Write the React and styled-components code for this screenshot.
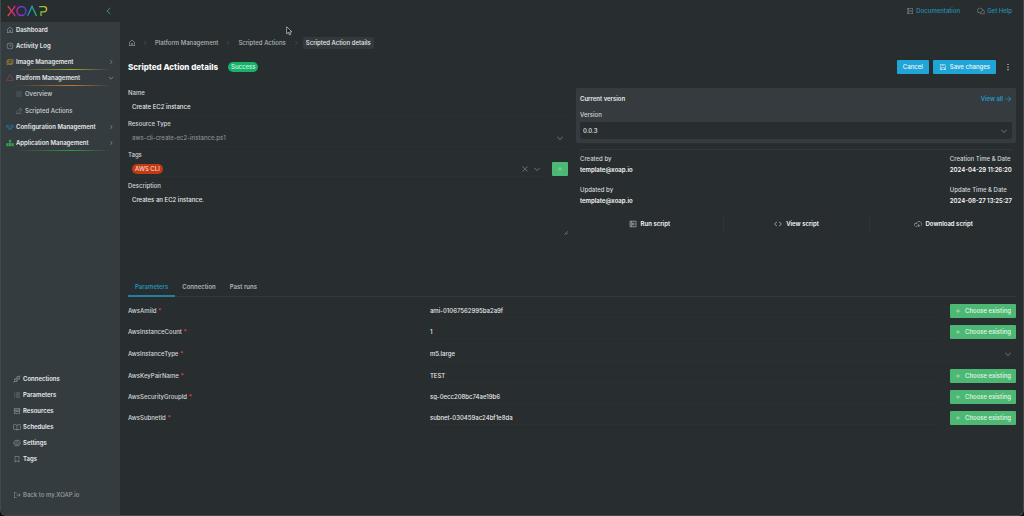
import { useState } from "react";
import styled, { createGlobalStyle } from "styled-components";
import {
  PiHouse,
  PiClock,
  PiImages,
  PiTriangle,
  PiList,
  PiPencilSimpleLine,
  PiUsersThree,
  PiPlugs,
  PiListDashes,
  PiStorefront,
  PiBookOpen,
  PiGearSix,
  PiBookmarkSimple,
  PiSignOut,
  PiNotebook,
  PiChatsCircle,
  PiFloppyDisk,
  PiDotsThreeVerticalBold,
  PiCodeSimple,
  PiCloudArrowDown,
  PiArrowRight,
  PiCaretLeft,
  PiCaretRight,
  PiCaretDown,
  PiX,
  PiPlus,
} from "react-icons/pi";

const COLORS = {
  page: "#282d2f",
  side: "#353c40",
  card: "#353b3f",
  line: "#33393c",
  label: "#d3d7d8",
  text: "#e6e9ea",
  bright: "#f6f8f8",
  muted: "#8b9194",
  blue: "#1fa5d8",
  link: "#2391b8",
  green: "#4cb873",
  success: "#17b26a",
  tag: "#c23a12",
  danger: "#e5325c",
};

const BlocksIcon = ({ size, color }) => (
  <svg width={size} height={size} viewBox="0 0 8 8">
    <path
      d="M2.9 0.8 H5.1 V3.2 H4.3 V4.3 H7.7 V7.2 H0.3 V4.3 H3.7 V3.2 H2.9 Z M2.5 5 V7.2 H2.9 V5 Z M5.1 5 V7.2 H5.5 V5 Z"
      fill={color}
      fillRule="evenodd"
    />
  </svg>
);

const RunIcon = () => (
  <svg width="8" height="8" viewBox="0 0 8 8" fill="none" stroke="currentColor" strokeWidth="0.7">
    <path d="M1 1.2 H7 V6.8 H1 Z M2.4 1.2 V6.8" />
    <path d="M3.7 2.8 L5.6 4 L3.7 5.2 Z" />
  </svg>
);

const mainNav = [
  { name: "Dashboard", icon: PiHouse },
  { name: "Activity Log", icon: PiClock },
  { name: "Image Management", icon: PiImages, color: "#c4922a", line: "#a3a52c", caret: "right" },
  {
    name: "Platform Management",
    icon: PiTriangle,
    color: "#b0413e",
    line: "#c9742a",
    caret: "down",
    children: [
      { name: "Overview", icon: PiList },
      { name: "Scripted Actions", icon: PiPencilSimpleLine },
    ],
  },
  { name: "Configuration Management", icon: PiUsersThree, color: "#2187b8", caret: "right" },
  { name: "Application Management", icon: BlocksIcon, color: "#35a04a", line: "#2f9a3c", caret: "right" },
];

const bottomNav = [
  { name: "Connections", icon: PiPlugs },
  { name: "Parameters", icon: PiListDashes },
  { name: "Resources", icon: PiStorefront },
  { name: "Schedules", icon: PiBookOpen },
  { name: "Settings", icon: PiGearSix },
  { name: "Tags", icon: PiBookmarkSimple },
];

const tabs = ["Parameters", "Connection", "Past runs"];

const initialParams = [
  { name: "AwsAmiId", value: "ami-01067562995ba2a9f" },
  { name: "AwsInstanceCount", value: "1" },
  { name: "AwsInstanceType", value: "m5.large", select: true },
  { name: "AwsKeyPairName", value: "TEST" },
  { name: "AwsSecurityGroupId", value: "sg-0ecc208bc74ae19b6" },
  { name: "AwsSubnetId", value: "subnet-030459ac24bf1e8da" },
];

const Logo = () => (
  <svg width="41" height="12" viewBox="0 0 41 12" fill="none" strokeWidth="1.3" aria-label="XOAP">
    <defs>
      <linearGradient id="logo" x1="0" y1="0" x2="41" y2="0" gradientUnits="userSpaceOnUse">
        <stop offset="0" stopColor="#e8482f" />
        <stop offset="0.15" stopColor="#d62a7c" />
        <stop offset="0.3" stopColor="#a02bd0" />
        <stop offset="0.44" stopColor="#5a3fe0" />
        <stop offset="0.56" stopColor="#1e9fd0" />
        <stop offset="0.72" stopColor="#22b573" />
        <stop offset="0.86" stopColor="#8cc832" />
        <stop offset="1" stopColor="#e0c020" />
      </linearGradient>
    </defs>
    <g stroke="url(#logo)">
      <path d="M0.8 1 L4.6 6 L0.8 11" />
      <path d="M8.2 1 L4.6 6 L8.2 11" />
      <circle cx="14.4" cy="6" r="4.5" />
      <path d="M20.5 11 L25 1.4 L29.5 11" />
      <path d="M32 1.6 H37 A2.6 2.6 0 0 1 37 6.8 H34 V11" />
    </g>
  </svg>
);

const NavEntry = ({ item }) => {
  const Icon = item.icon;
  return (
    <li>
      <NavLink href="#" $line={item.line} $iconColor={item.color}>
        <Icon size="8" color={item.color} />
        <span>{item.name}</span>
        {item.caret === "right" && <PiCaretRight size="6" />}
        {item.caret === "down" && <PiCaretDown size="6" />}
      </NavLink>
      {item.children && (
        <SubList>
          {item.children.map((child) => (
            <li key={child.name}>
              <SubLink href="#">
                <child.icon size="8" />
                {child.name}
              </SubLink>
            </li>
          ))}
        </SubList>
      )}
    </li>
  );
};

const Sidebar = () => (
  <Side>
    <SideHeader>
      <Logo />
      <IconButton aria-label="Collapse menu">
        <PiCaretLeft size="10" color="#45a5b5" />
      </IconButton>
    </SideHeader>
    <SideBody>
      <NavList>
        {mainNav.map((item) => (
          <NavEntry key={item.name} item={item} />
        ))}
      </NavList>
      <BottomList>
        {bottomNav.map(({ name, icon: Icon }) => (
          <li key={name}>
            <NavLink href="#">
              <Icon size="8" />
              <span>{name}</span>
            </NavLink>
          </li>
        ))}
      </BottomList>
      <BackLink href="#">
        <PiSignOut size="8" />
        Back to my.XOAP.io
      </BackLink>
    </SideBody>
  </Side>
);

const DetailsForm = () => (
  <Form>
    <Field>
      <Label htmlFor="name">Name</Label>
      <TextInput id="name" defaultValue="Create EC2 instance" />
    </Field>
    <Field>
      <Label htmlFor="type">Resource Type</Label>
      <SelectBox>
        <Select id="type" disabled>
          <option>aws-cli-create-ec2-instance.ps1</option>
        </Select>
        <PiCaretDown size="8" />
      </SelectBox>
    </Field>
    <Field>
      <Label as="span">Tags</Label>
      <TagRow>
        <TagBox>
          <Tag>AWS CLI</Tag>
          <IconButton aria-label="Clear tags">
            <PiX size="8" />
          </IconButton>
          <IconButton aria-label="Open tags">
            <PiCaretDown size="8" />
          </IconButton>
        </TagBox>
        <AddButton aria-label="Add tag">
          <PiPlus size="6" />
        </AddButton>
      </TagRow>
    </Field>
    <Field>
      <Label htmlFor="description">Description</Label>
      <AreaBox>
        <TextArea id="description" defaultValue="Creates an EC2 instance." />
        <svg width="4" height="4" viewBox="0 0 4 4" fill="none" stroke="#8b9194" strokeWidth="0.7">
          <path d="M3.6 0.4 L0.4 3.6 M3.6 2.2 L2.2 3.6" />
        </svg>
      </AreaBox>
    </Field>
  </Form>
);

const VersionPanel = () => (
  <Panel>
    <Card>
      <CardHeader>
        <CardTitle>Current version</CardTitle>
        <ViewAll href="#">
          View all
          <PiArrowRight size="8" />
        </ViewAll>
      </CardHeader>
      <Label htmlFor="version">Version</Label>
      <VersionSelectBox>
        <Select id="version">
          <option>0.0.3</option>
        </Select>
        <PiCaretDown size="8" />
      </VersionSelectBox>
    </Card>
    <Meta>
      <div>
        <dt>Created by</dt>
        <dd>template@xoap.io</dd>
      </div>
      <div>
        <dt>Creation Time &amp; Date</dt>
        <dd>2024-04-29 11:26:20</dd>
      </div>
      <div>
        <dt>Updated by</dt>
        <dd>template@xoap.io</dd>
      </div>
      <div>
        <dt>Update Time &amp; Date</dt>
        <dd>2024-08-27 13:25:27</dd>
      </div>
    </Meta>
    <ScriptActions>
      <ScriptButton>
        <RunIcon />
        Run script
      </ScriptButton>
      <ScriptButton>
        <PiCodeSimple size="8" />
        View script
      </ScriptButton>
      <ScriptButton>
        <PiCloudArrowDown size="8" />
        Download script
      </ScriptButton>
    </ScriptActions>
  </Panel>
);

const ParamRow = ({ param }) => (
  <Row>
    <ParamLabel htmlFor={param.name}>
      {param.name} <Required>*</Required>
    </ParamLabel>
    {param.select ? (
      <ParamSelectBox>
        <Select id={param.name}>
          <option>{param.value}</option>
        </Select>
        <PiCaretDown size="8" />
      </ParamSelectBox>
    ) : (
      <>
        <ParamInput id={param.name} defaultValue={param.value} />
        <ChooseButton>
          <PiPlus size="6" />
          Choose existing
        </ChooseButton>
      </>
    )}
  </Row>
);

const App = () => {
  const [activeTab, setActiveTab] = useState("Parameters");

  return (
    <>
      <GlobalStyle />
      <Window>
        <Sidebar />
        <Main>
          <TopBar>
            <TopLink href="#">
              <PiNotebook size="8" />
              Documentation
            </TopLink>
            <TopLink href="#">
              <PiChatsCircle size="8" />
              Get Help
            </TopLink>
          </TopBar>
          <Breadcrumb aria-label="Breadcrumb">
            <Crumb href="#" aria-label="Home">
              <PiHouse size="8" />
            </Crumb>
            <PiCaretRight size="6" />
            <Crumb href="#">Platform Management</Crumb>
            <PiCaretRight size="6" />
            <Crumb href="#">Scripted Actions</Crumb>
            <PiCaretRight size="6" />
            <Crumb href="#" $current>
              Scripted Action details
            </Crumb>
          </Breadcrumb>
          <TitleRow>
            <Title>Scripted Action details</Title>
            <Status>Success</Status>
            <TitleActions>
              <PrimaryButton>Cancel</PrimaryButton>
              <PrimaryButton>
                <PiFloppyDisk size="8" />
                Save changes
              </PrimaryButton>
              <MoreButton aria-label="More">
                <PiDotsThreeVerticalBold size="10" />
              </MoreButton>
            </TitleActions>
          </TitleRow>
          <Columns>
            <DetailsForm />
            <VersionPanel />
          </Columns>
          <TabList role="tablist">
            {tabs.map((tab) => (
              <Tab
                key={tab}
                role="tab"
                aria-selected={tab === activeTab}
                $active={tab === activeTab}
                onClick={() => setActiveTab(tab)}
              >
                {tab}
              </Tab>
            ))}
          </TabList>
          <Params>
            {initialParams.map((param) => (
              <ParamRow key={param.name} param={param} />
            ))}
          </Params>
        </Main>
        <Pointer width="7" height="10" viewBox="0 0 7 10">
          <path
            d="M0.7 0.8 V7.8 L2.4 6.3 L3.5 9 L4.7 8.5 L3.6 5.9 H5.9 Z"
            fill="#111"
            stroke="#d8dada"
            strokeWidth="0.7"
          />
        </Pointer>
      </Window>
    </>
  );
};

const GlobalStyle = createGlobalStyle`
  * {
    box-sizing: border-box;
  }
  body {
    margin: 0;
    background: #0b0d0e;
    color: ${COLORS.text};
    font-family: Inter, "Liberation Sans", sans-serif;
    font-size: 6px;
    font-weight: 500;
    line-height: 10px;
  }
  a {
    color: inherit;
    text-decoration: none;
  }
  ul, dl, dd, h1, h2 {
    margin: 0;
    padding: 0;
    list-style: none;
  }
  button, input, select, textarea {
    margin: 0;
    padding: 0;
    border: 0;
    border-radius: 0;
    outline: none;
    background: transparent;
    color: inherit;
    font: inherit;
  }
  button {
    cursor: pointer;
  }
  svg {
    display: block;
    flex-shrink: 0;
  }
`;

const Window = styled.div`
  position: relative;
  display: flex;
  min-height: 100vh;
  border: 1px solid #42494c;
  border-top: 0;
  border-radius: 0 0 6px 6px;
  background: ${COLORS.page};
  overflow: hidden;
`;

const Side = styled.aside`
  display: flex;
  flex-direction: column;
  flex: 0 0 119px;
`;

const SideHeader = styled.div`
  display: flex;
  align-items: center;
  justify-content: space-between;
  height: 22px;
  padding: 0 6px;
`;

const SideBody = styled.nav`
  display: flex;
  flex-direction: column;
  flex: 1;
  padding-bottom: 15px;
  background: ${COLORS.side};
`;

const NavList = styled.ul`
  flex: 1;
`;

const NavLink = styled.a`
  display: flex;
  align-items: center;
  gap: 2px;
  height: 16px;
  padding: 0 6px 1px 5px;
  color: ${COLORS.text};
  font-weight: 600;
  background: ${(props) =>
    props.$line
      ? `linear-gradient(90deg, transparent 12%, ${props.$line} 60%, transparent 92%) bottom / 100% 1px no-repeat`
      : "none"};

  span {
    flex: 1;
  }
  svg {
    color: #9ba1a4;
  }
  svg:first-child {
    color: ${(props) => props.$iconColor || "#9ba1a4"};
  }
`;

const SubList = styled.ul`
  display: grid;
  gap: 1px;
`;

const SubLink = styled.a`
  display: flex;
  align-items: center;
  gap: 2px;
  height: 16px;
  padding-left: 14px;
  color: #ccd1d3;

  svg {
    color: #70777b;
  }
`;

const BottomList = styled.ul`
  margin-bottom: 23px;
  padding-left: 7px;
`;

const BackLink = styled.a`
  display: flex;
  align-items: center;
  gap: 2px;
  padding-left: 12px;
  color: #989ea1;
`;

const Main = styled.main`
  flex: 1;
  min-width: 0;
  padding: 0 7px 16px 8px;
`;

const TopBar = styled.div`
  display: flex;
  align-items: center;
  justify-content: flex-end;
  gap: 17px;
  height: 22px;
  padding-right: 4px;
`;

const TopLink = styled.a`
  display: flex;
  align-items: center;
  gap: 2px;
  color: ${COLORS.link};

  svg {
    color: #858b8e;
  }
`;

const Breadcrumb = styled.nav`
  display: flex;
  align-items: center;
  gap: 4px;
  margin-top: 15px;
  color: #565c5f;
`;

const Crumb = styled.a`
  padding: 1px 3px;
  border-radius: 2px;
  color: ${(props) => (props.$current ? COLORS.text : "#b0b5b7")};
  background: ${(props) => (props.$current ? "#333a3d" : "transparent")};

  &:first-child {
    padding: 0 2px 0 0;
  }
`;

const TitleRow = styled.div`
  display: flex;
  align-items: center;
  gap: 10px;
  height: 14px;
  margin-top: 11px;
`;

const Title = styled.h1`
  color: ${COLORS.bright};
  font-size: 8px;
  font-weight: 800;
`;

const Status = styled.span`
  padding: 0 3px;
  border-radius: 5px;
  background: ${COLORS.success};
  color: #d5f5e3;
`;

const TitleActions = styled.div`
  display: flex;
  align-items: center;
  gap: 4px;
  margin-left: auto;
`;

const PrimaryButton = styled.button`
  display: flex;
  align-items: center;
  gap: 3px;
  height: 14px;
  padding: 0 6px;
  border-radius: 1px;
  background: ${COLORS.blue};
  color: ${COLORS.bright};
`;

const IconButton = styled.button`
  color: ${COLORS.muted};
`;

const MoreButton = styled(IconButton)`
  padding: 0 3px;
  color: ${COLORS.bright};
`;

const Columns = styled.div`
  display: grid;
  grid-template-columns: 1fr 1fr;
  gap: 8px;
  margin-top: 14px;
`;

const Form = styled.form`
  display: flex;
  flex-direction: column;
  gap: 3px;
`;

const Field = styled.div`
  display: flex;
  flex-direction: column;
`;

const Label = styled.label`
  color: ${COLORS.label};
`;

const TextInput = styled.input`
  height: 18px;
  padding: 0 4px;
  border-bottom: 1px solid #2b3133;
`;

const SelectBox = styled.div`
  display: flex;
  align-items: center;
  height: 18px;
  padding: 0 4px;
  border-bottom: 1px solid #2b3133;
  color: ${COLORS.muted};
`;

const Select = styled.select`
  flex: 1;
  appearance: none;

  &:disabled {
    opacity: 1;
  }
`;

const TagRow = styled.div`
  display: flex;
  align-items: center;
  gap: 8px;
  height: 18px;
`;

const TagBox = styled.div`
  display: flex;
  align-items: center;
  flex: 1;
  gap: 4px;
  height: 16px;
  padding: 0 3px 0 4px;
  border-bottom: 1px solid #2b3133;
`;

const Tag = styled.span`
  margin-right: auto;
  padding: 0 3px;
  border-radius: 5px;
  background: ${COLORS.tag};
  color: #f3d9cf;
`;

const AddButton = styled.button`
  display: grid;
  place-items: center;
  width: 16px;
  height: 14px;
  border-radius: 1px;
  background: ${COLORS.green};
  color: #b6e6c6;
`;

const AreaBox = styled.div`
  display: flex;
  align-items: flex-end;
  height: 46px;
  padding: 4px 0 2px 4px;
`;

const TextArea = styled.textarea`
  flex: 1;
  align-self: stretch;
  resize: none;
`;

const Panel = styled.section`
  display: flex;
  flex-direction: column;
`;

const Card = styled.div`
  display: flex;
  flex-direction: column;
  padding: 6px 4px 4px 4px;
  border-radius: 2px;
  background: ${COLORS.card};
`;

const CardHeader = styled.div`
  display: flex;
  align-items: center;
  justify-content: space-between;
  margin-bottom: 6px;
`;

const CardTitle = styled.h2`
  font-size: 6px;
  font-weight: 600;
`;

const ViewAll = styled.a`
  display: flex;
  align-items: center;
  gap: 1px;
  color: ${COLORS.blue};
`;

const VersionSelectBox = styled(SelectBox)`
  margin-top: 2px;
  height: 17px;
  padding: 0 4px 0 3px;
  border: 0;
  border-radius: 2px;
  background: ${COLORS.page};

  select {
    color: ${COLORS.text};
  }
`;

const Meta = styled.dl`
  display: grid;
  grid-template-columns: 1fr auto;
  gap: 10px;
  margin: 6px 4px 0;
  padding-top: 4px;
  border-top: 1px solid ${COLORS.line};

  dt {
    color: ${COLORS.label};
  }
  dd {
    margin-top: 1px;
    color: ${COLORS.bright};
    font-weight: 600;
  }
`;

const ScriptActions = styled.div`
  display: grid;
  grid-template-columns: repeat(3, 1fr);
  margin-top: 10px;
`;

const ScriptButton = styled.button`
  display: flex;
  align-items: center;
  justify-content: center;
  gap: 4px;
  height: 16px;
  color: ${COLORS.bright};
  font-weight: 600;

  & + & {
    border-left: 1px solid #2e3436;
  }
  svg {
    color: #b5babc;
  }
`;

const TabList = styled.div`
  display: flex;
  margin-top: 38px;
  border-bottom: 1px solid ${COLORS.line};
`;

const Tab = styled.button`
  height: 22px;
  margin-bottom: -1px;
  padding: 3px 7px 0;
  border-bottom: 2px solid ${(props) => (props.$active ? "#22809f" : "transparent")};
  color: ${(props) => (props.$active ? COLORS.link : "#b0b5b7")};
  font-weight: 600;
`;

const Params = styled.div`
  display: grid;
  gap: 7px;
  margin-top: 7px;
`;

const Row = styled.div`
  display: flex;
  align-items: center;
`;

const ParamLabel = styled.label`
  flex: 0 0 34%;
  color: ${COLORS.label};
`;

const Required = styled.span`
  color: ${COLORS.danger};
  font-weight: 700;
`;

const ParamInput = styled.input`
  flex: 1;
  min-width: 0;
  height: 14px;
  margin-right: 9px;
  border-bottom: 1px solid #2b3133;
`;

const ParamSelectBox = styled(SelectBox)`
  flex: 1;
  height: 16px;
  padding: 0 4px 0 0;

  select {
    color: ${COLORS.text};
  }
`;

const ChooseButton = styled.button`
  display: flex;
  align-items: center;
  justify-content: center;
  gap: 4px;
  width: 66px;
  height: 14px;
  border-radius: 1px;
  background: ${COLORS.green};
  color: #e4f7ea;
`;

const Pointer = styled.svg`
  position: absolute;
  left: 285px;
  top: 26px;
`;

export default App;
